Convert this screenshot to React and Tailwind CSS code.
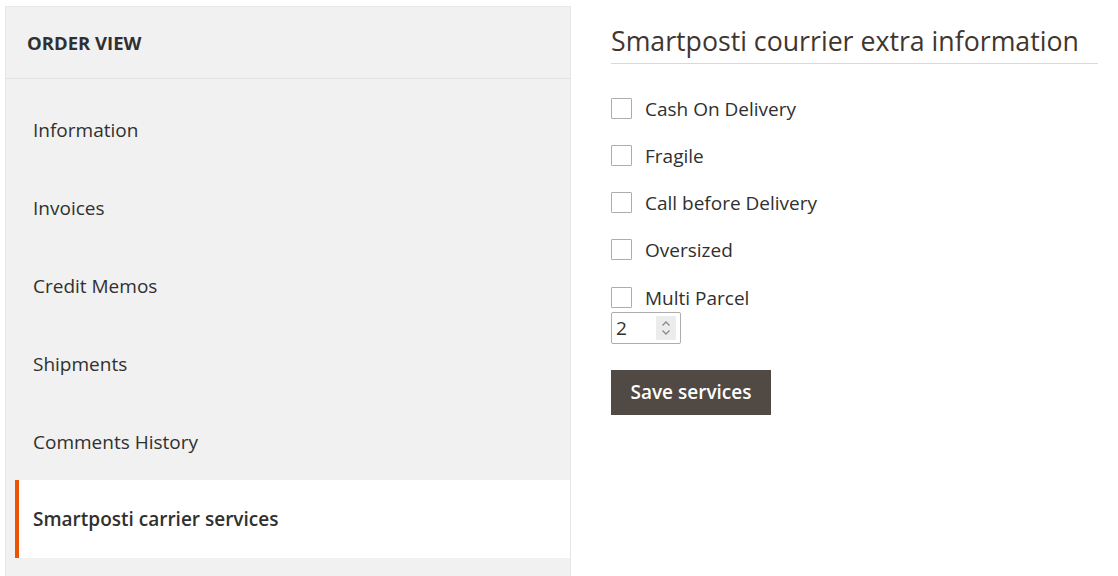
import React from "react";

const items = ["Information", "Invoices", "Credit Memos", "Shipments", "Comments History"];
const options = ["Cash On Delivery", "Fragile", "Call before Delivery", "Oversized"];

function Checkbox() {
  return <span className="block w-[21px] h-[21px] border border-[#adadad] bg-white rounded-[1px] shrink-0" />;
}

export default function App() {
  return (
    <div
      className="w-[1118px] h-[576px] overflow-hidden bg-white flex text-[#303030]"
      style={{ fontFamily: '"Open Sans", "Noto Sans", sans-serif' }}
    >
      <aside className="ml-[5px] mt-[6px] w-[566px] h-[600px] bg-[#f1f1f1] border border-[#e6e6e6] shrink-0">
        <div className="h-[72px] flex items-center pl-[21px] border-b border-[#e1e1e1]">
          <span className="text-[18.5px] font-bold text-[#303030]">ORDER VIEW</span>
        </div>
        <ul className="pt-[11px]">
          {items.map((t) => (
            <li key={t} className="h-[78px] flex items-center pl-[27px] text-[19px] pt-[2px]">
              {t}
            </li>
          ))}
          <li className="h-[78px] ml-[9px] flex items-center pl-[14px] text-[19px] font-semibold bg-white border-l-[4px] border-[#eb5202]">
            Smartposti carrier services
          </li>
        </ul>
      </aside>
      <main className="ml-[40px] w-[487px] shrink-0">
        <h2 className="mt-[25px] text-[26.7px] leading-[32px] pb-[6px] border-b border-[#d9d9d9] text-[#41362f] font-normal">
          Smartposti courrier extra information
        </h2>
        <div className="mt-[34px] flex flex-col gap-[26px]">
          {options.map((o) => (
            <label key={o} className="flex items-center h-[21px] gap-[13px] text-[19px]">
              <Checkbox />
              <span className="pt-[2px]">{o}</span>
            </label>
          ))}
          <div className="pt-[1px]">
            <label className="flex items-center h-[21px] gap-[13px] text-[19px]">
              <Checkbox />
              <span className="pt-[2px]">Multi Parcel</span>
            </label>
            <div className="mt-[4px] w-[70px] h-[32px] border border-[#adadad] rounded-[2px] bg-white flex items-center pl-[4px] pr-[4px]">
              <span className="text-[19px] flex-1">2</span>
              <span className="w-[20px] h-[24px] bg-[#ececec] flex items-center justify-center">
                <svg width="10" height="16" viewBox="0 0 10 16" fill="none" stroke="#8a8a8a" strokeWidth="1.3">
                  <path d="M1.5 5.5 L5 2 L8.5 5.5" />
                  <path d="M1.5 10.5 L5 14 L8.5 10.5" />
                </svg>
              </span>
            </div>
            <button className="mt-[26px] w-[160px] h-[45px] bg-[#514943] text-white text-[19px] font-semibold">
              Save services
            </button>
          </div>
        </div>
      </main>
    </div>
  );
}
